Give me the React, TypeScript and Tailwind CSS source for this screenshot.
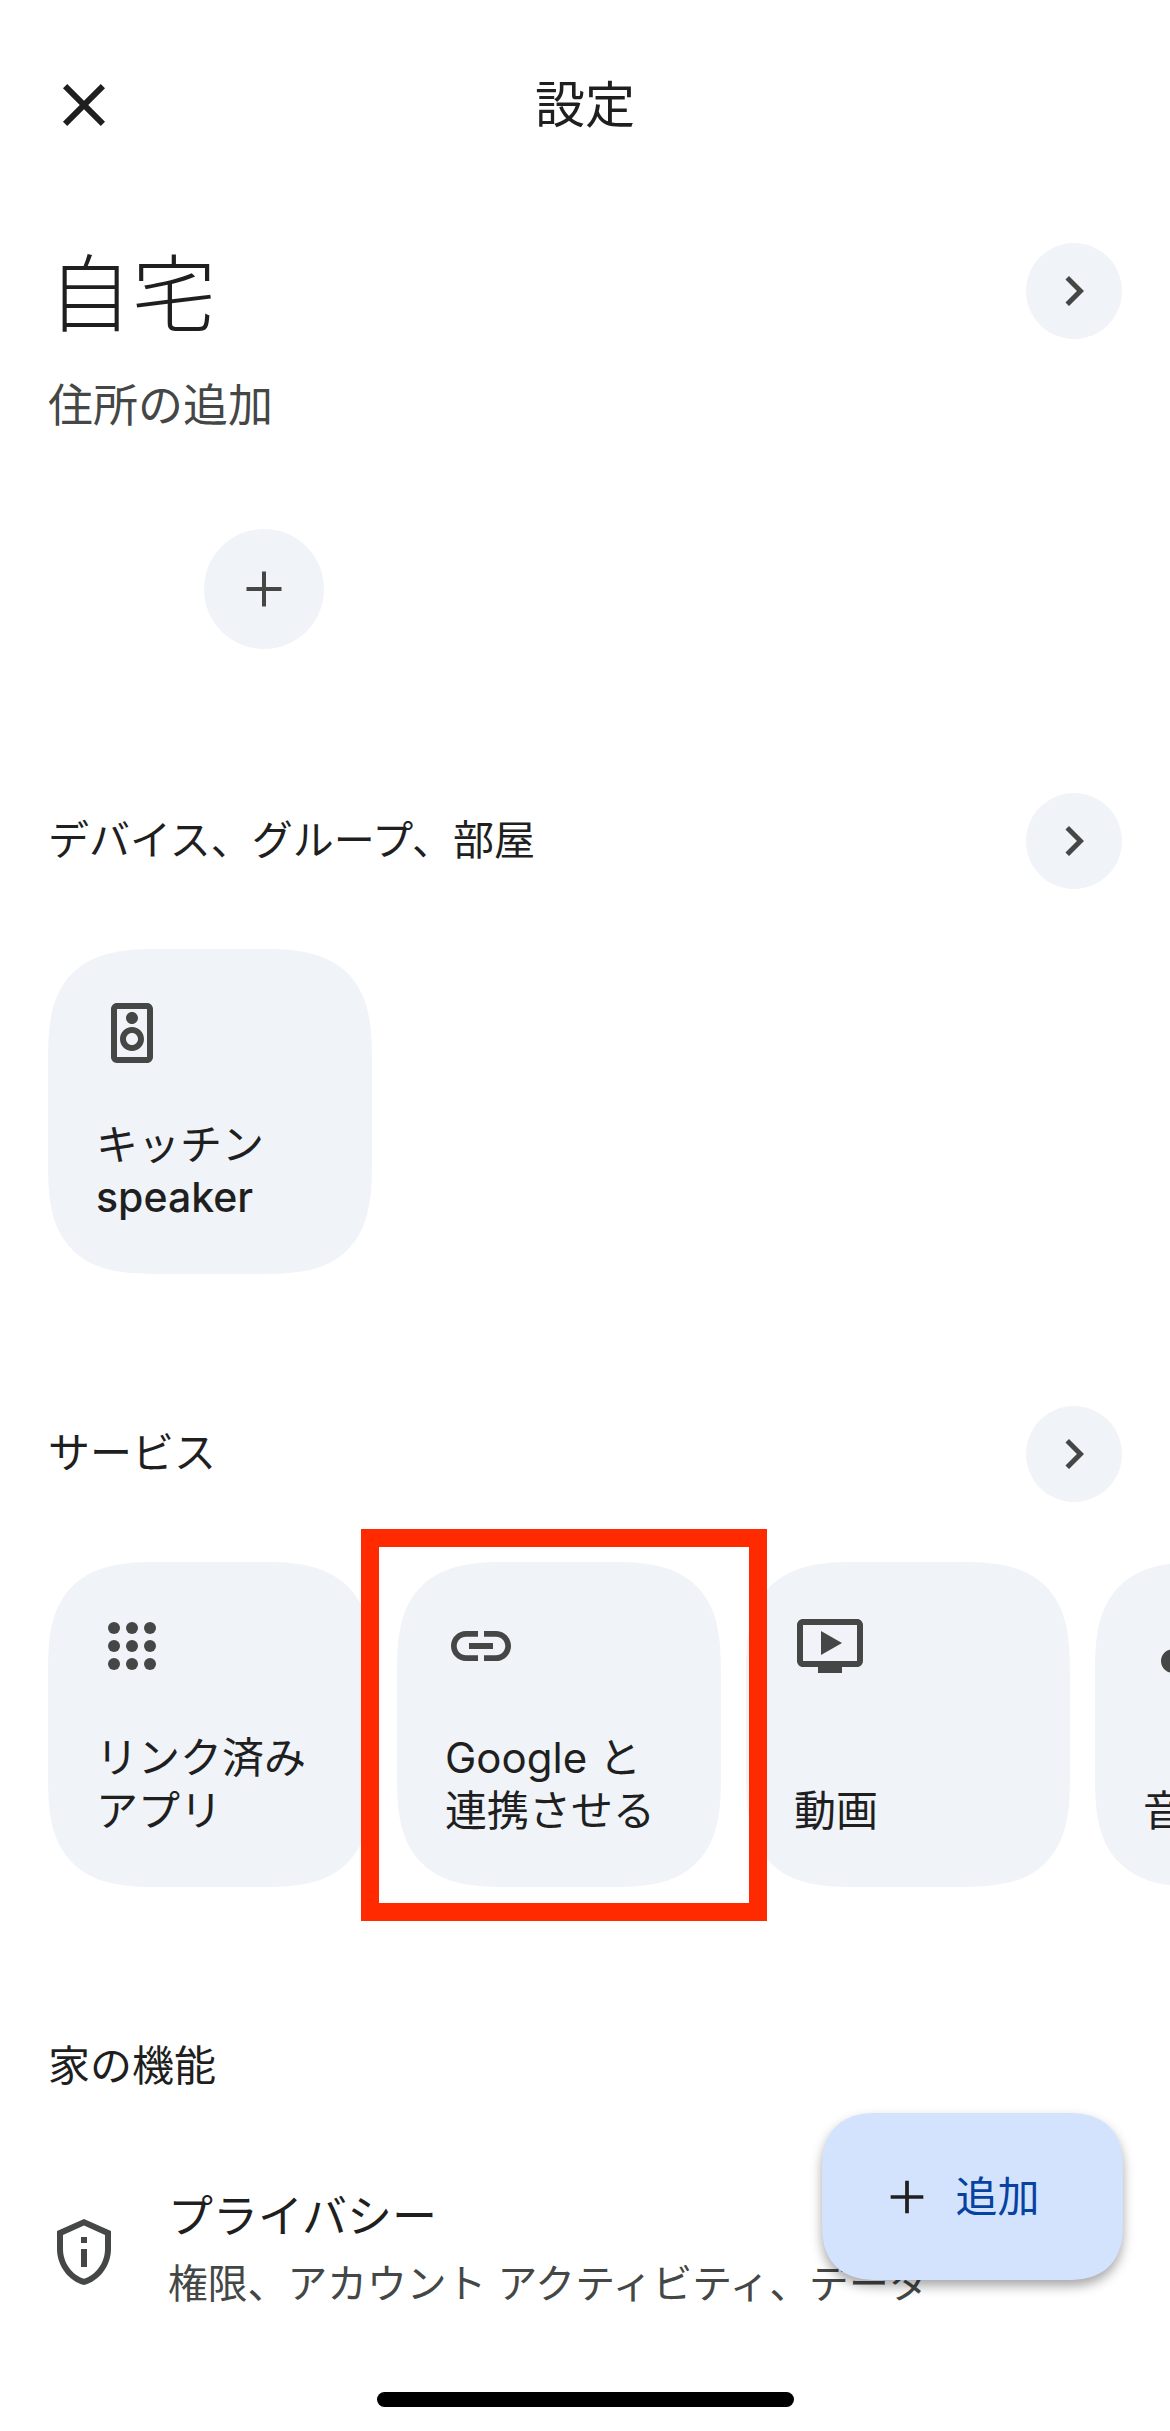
import type { ReactNode } from 'react';

const ICONS = {
  close: 'M19 6.41L17.59 5 12 10.59 6.41 5 5 6.41 10.59 12 5 17.59 6.41 19 12 13.41 17.59 19 19 17.59 13.41 12z',
  chevron: 'M10 6L8.59 7.41 13.17 12l-4.58 4.59L10 18l6-6z',
  add: 'M19 12.8h-6.2V19h-1.6v-6.2H5v-1.6h6.2V5h1.6v6.2H19z',
  speaker:
    'M17 2H7c-1.1 0-2 .9-2 2v16c0 1.1.9 1.99 2 1.99L17 22c1.1 0 2-.9 2-2V4c0-1.1-.9-2-2-2zM7 20V4h10v16H7zm5-11c1.1 0 2-.9 2-2s-.9-2-2-2c-1.11 0-2 .9-2 2s.89 2 2 2zm0 1c-2.21 0-4 1.79-4 4s1.79 4 4 4 4-1.79 4-4-1.79-4-4-4zm0 6c-1.1 0-2-.9-2-2s.9-2 2-2 2 .9 2 2-.9 2-2 2z',
  link: 'M3.9 12c0-1.71 1.39-3.1 3.1-3.1h4V7H7c-2.76 0-5 2.24-5 5s2.24 5 5 5h4v-1.9H7c-1.71 0-3.1-1.39-3.1-3.1zM8 13h8v-2H8v2zm9-6h-4v1.9h4c1.71 0 3.1 1.39 3.1 3.1s-1.39 3.1-3.1 3.1h-4V17h4c2.76 0 5-2.24 5-5s-2.24-5-5-5z',
  video:
    'M21 3H3c-1.11 0-2 .89-2 2v12c0 1.1.89 2 2 2h5v2h8v-2h5c1.1 0 1.99-.9 1.99-2L23 5c0-1.11-.9-2-2-2zm0 14H3V5h18v12zm-5-6l-7 4V7z',
  music: 'M12 3v10.55c-.59-.34-1.27-.55-2-.55-2.21 0-4 1.79-4 4s1.79 4 4 4 4-1.79 4-4V7h4V3h-6z',
  privacy:
    'M12 1L3 5v6c0 5.55 3.84 10.74 9 12 5.16-1.26 9-6.45 9-12V5l-9-4zm7 10c0 4.52-2.98 8.69-7 9.93-4.02-1.24-7-5.41-7-9.93V6.3l7-3.11 7 3.11V11zM11 7h2v2h-2zm0 4h2v6h-2z',
};

function Icon({ d, className }: { d: string; className: string }) {
  return (
    <svg viewBox="0 0 24 24" fill="currentColor" className={className}>
      <path d={d} />
    </svg>
  );
}

function DotsIcon() {
  const spots = [6, 12, 18];
  return (
    <svg viewBox="0 0 24 24" fill="currentColor" className="w-[72px] h-[72px] text-[#444746]">
      {spots.map((cy) => spots.map((cx) => <circle key={`${cx}-${cy}`} cx={cx} cy={cy} r="2" />))}
    </svg>
  );
}

function CircleChevron() {
  return (
    <button className="w-24 h-24 rounded-full bg-[#f0f3f8] flex items-center justify-center shrink-0">
      <Icon d={ICONS.chevron} className="w-[60px] h-[60px] text-[#444746]" />
    </button>
  );
}

function Tile({ icon, children }: { icon: ReactNode; children: ReactNode }) {
  return (
    <div className="w-[324px] h-[325px] shrink-0 rounded-[112px] [corner-shape:superellipse(1.5)] bg-[#f0f3f8] pl-12 pt-12 flex flex-col justify-between pb-[50px]">
      {icon}
      <div className="text-[42px] leading-[53px] text-[#1f1f1f] whitespace-nowrap">{children}</div>
    </div>
  );
}

export default function App() {
  const tileIcon = 'w-[72px] h-[72px] text-[#444746]';
  return (
    <div
      className="relative w-[1170px] h-[2431px] overflow-hidden bg-white text-[#1f1f1f]"
      style={{ fontFamily: '"Inter", "Noto Sans CJK JP", sans-serif' }}
    >
      {/* top bar */}
      <header className="flex items-center justify-between pl-12 pr-12 pt-[69px] h-[141px]">
        <Icon d={ICONS.close} className="w-[72px] h-[72px] text-[#1f1f1f]" />
        <h1 className="text-[50px] leading-[72px]">設定</h1>
        <div className="w-[72px]" />
      </header>

      {/* home summary */}
      <section className="pl-12 pr-12 pt-[102px]">
        <div className="flex items-start justify-between">
          <h2 className="text-[84px] leading-[104px] h-24 font-light">自宅</h2>
          <CircleChevron />
        </div>
        <p className="text-[45px] leading-[60px] text-[#444746] mt-[37px]">住所の追加</p>
        <div className="pl-[156px] mt-[93px]">
          <button className="w-[120px] h-[120px] rounded-full bg-[#f0f3f8] flex items-center justify-center">
            <Icon d={ICONS.add} className="w-[60px] h-[60px] text-[#444746]" />
          </button>
        </div>
      </section>

      {/* devices */}
      <section className="pt-[144px]">
        <div className="flex items-center justify-between pl-12 pr-12">
          <h3 className="text-[41px] leading-[56px] pb-[3px]">デバイス、グループ、部屋</h3>
          <CircleChevron />
        </div>
        <div className="flex gap-[25px] pl-12 mt-[60px]">
          <Tile icon={<Icon d={ICONS.speaker} className={tileIcon} />}>
            <div>キッチン</div>
            <div className="text-[41px] font-medium">speaker</div>
          </Tile>
        </div>
      </section>

      {/* services */}
      <section className="pt-[132px]">
        <div className="flex items-center justify-between pl-12 pr-12">
          <h3 className="text-[42px] leading-[56px] pb-[3px]">サービス</h3>
          <CircleChevron />
        </div>
        <div className="flex gap-[25px] pl-12 mt-[60px]">
          <Tile icon={<DotsIcon />}>
            <div>リンク済み</div>
            <div>アプリ</div>
          </Tile>
          <Tile icon={<Icon d={ICONS.link} className={tileIcon} />}>
            <div>Google と</div>
            <div>連携させる</div>
          </Tile>
          <Tile icon={<Icon d={ICONS.video} className={tileIcon} />}>
            <div>動画</div>
          </Tile>
          <Tile icon={<Icon d={ICONS.music} className={tileIcon} />}>
            <div>音楽</div>
          </Tile>
        </div>
      </section>

      {/* home features */}
      <section className="pt-[151px]">
        <h3 className="text-[42px] leading-[56px] pl-12">家の機能</h3>
        <div className="flex items-center gap-[48px] pl-12 mt-[93px]">
          <Icon d={ICONS.privacy} className="w-[72px] h-[72px] text-[#444746]" />
          <div className="pb-[7px]">
            <div className="text-[45px] leading-[60px]">プライバシー</div>
            <div className="text-[39.8px] leading-[52px] text-[#444746] whitespace-nowrap mt-[11px]">
              権限、アカウント アクティビティ、データ
            </div>
          </div>
        </div>
      </section>

      {/* highlight around the Google tile */}
      <div className="absolute left-[361px] top-[1529px] w-[406px] h-[392px] border-[18px] border-[#ff2a00]" />

      {/* add button */}
      <button className="absolute left-[822px] top-[2113px] w-[301px] h-[167px] rounded-[56px] [corner-shape:superellipse(1.3)] bg-[#d3e3fd] shadow-[0_6px_12px_rgba(0,0,0,0.35)] flex items-center justify-center gap-[20px] pr-[26px]">
        <Icon d={ICONS.add} className="w-[56px] h-[56px] text-[#1f1f1f]" />
        <span className="text-[42px] leading-[56px] text-[#0842a0]">追加</span>
      </button>

      {/* home indicator */}
      <div className="absolute left-[377px] top-[2392px] w-[417px] h-[15px] rounded-full bg-black" />
    </div>
  );
}
